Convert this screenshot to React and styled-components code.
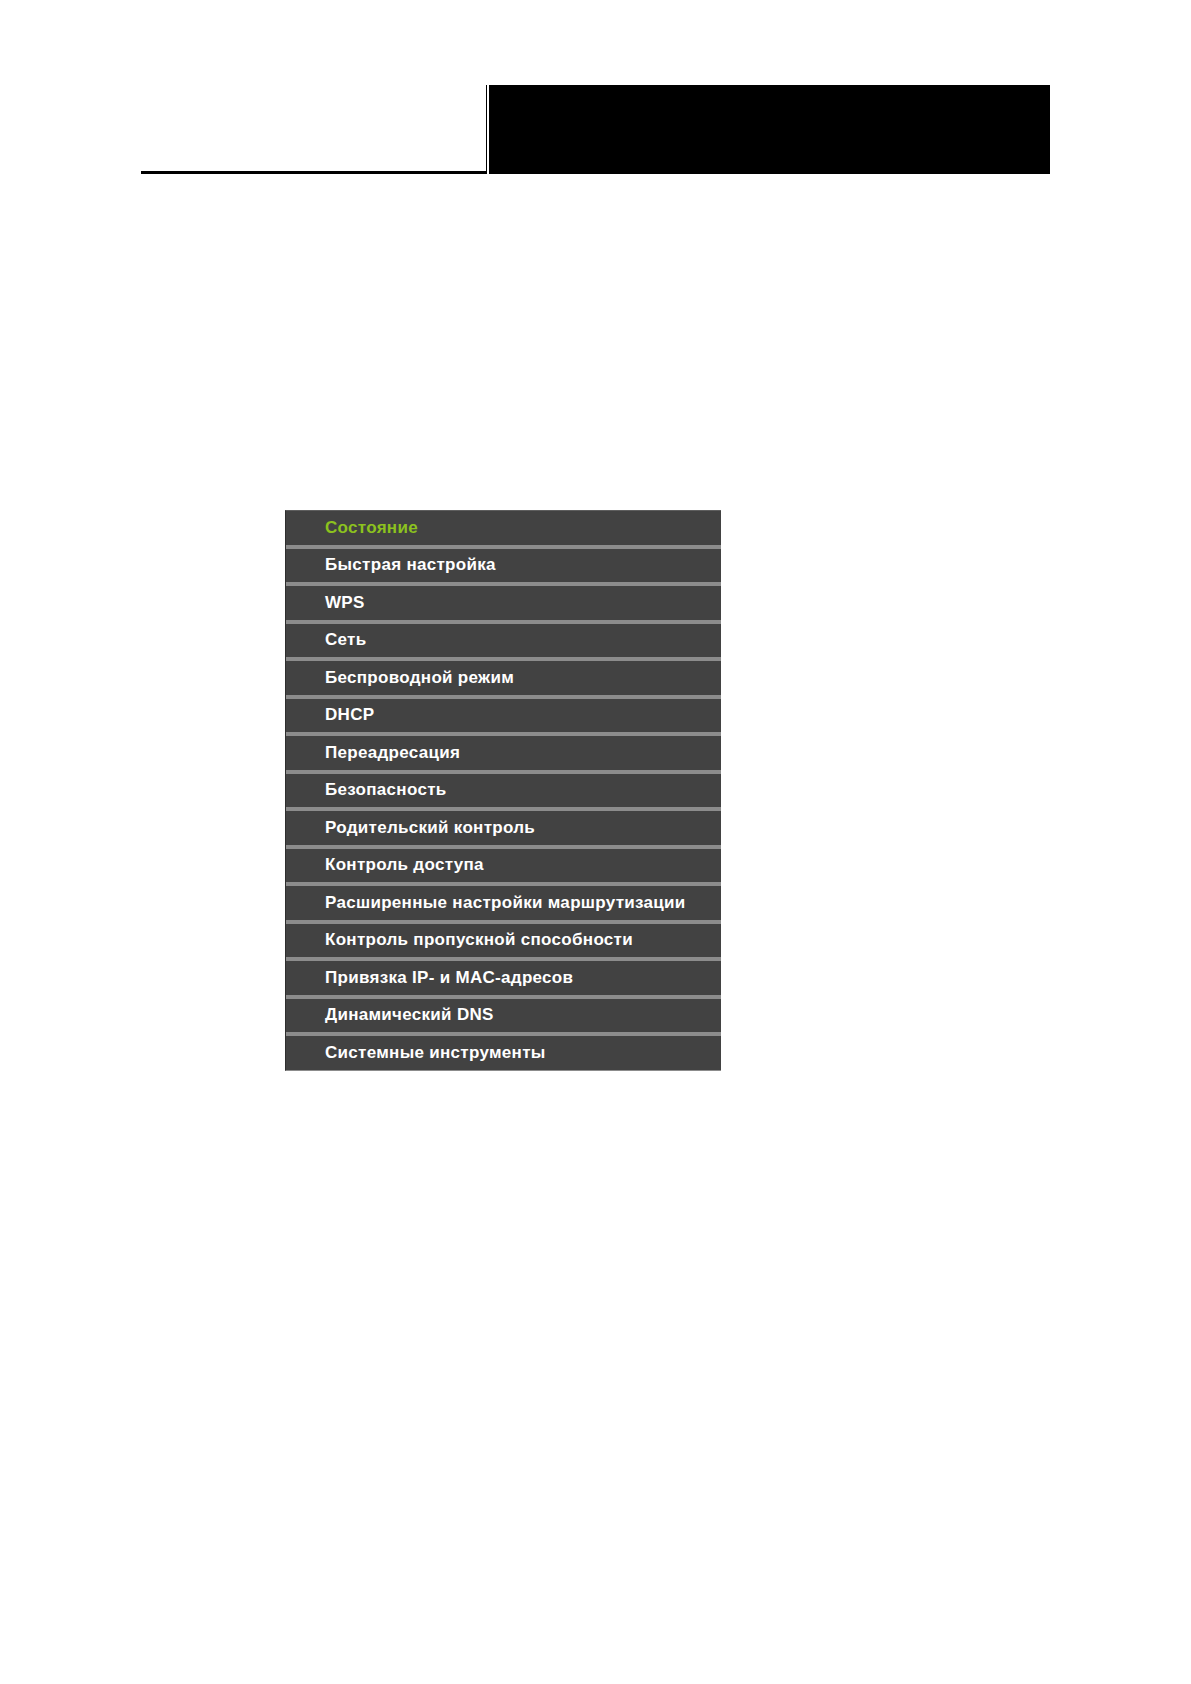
import React from 'react';
import styled, { createGlobalStyle } from 'styled-components';

const GlobalStyle = createGlobalStyle`
  html, body {
    margin: 0;
    padding: 0;
    background: #ffffff;
  }
  body {
    font-family: "Liberation Sans", Arial, sans-serif;
  }
`;

const Page = styled.div`
  width: 1191px;
  min-height: 1684px;
  padding-top: 85px;
  box-sizing: border-box;
`;

const Header = styled.header`
  display: flex;
  align-items: stretch;
  height: 89px;
  padding-left: 141px;
`;

const HeaderRule = styled.div`
  width: 345px;
  border-bottom: 3px solid #000;
  box-sizing: border-box;
`;

const HeaderBlock = styled.div`
  display: flex;
  border-left: 1px solid #000;
  padding-left: 2px;
`;

const HeaderBox = styled.div`
  width: 561px;
  background: #000;
`;

const Menu = styled.nav`
  width: 435px;
  margin: 336px 0 0 285px;
  background: #424242;
  border-top: 1px solid #5e5e5e;
  border-left: 1px solid #2e2e2e;
  border-bottom: 1px solid #8c8c8c;
  display: flex;
  flex-direction: column;
`;

const MenuItem = styled.div`
  height: 33.5px;
  display: flex;
  align-items: center;
  padding-left: 39px;
  color: ${p => (p.$active ? '#8cc21e' : '#ffffff')};
  font-size: 17px;
  letter-spacing: 0.3px;
  font-weight: bold;
  white-space: nowrap;
  & + & {
    border-top: 4px solid #8c8c8c;
  }
`;

const items = [
  'Состояние',
  'Быстрая настройка',
  'WPS',
  'Сеть',
  'Беспроводной режим',
  'DHCP',
  'Переадресация',
  'Безопасность',
  'Родительский контроль',
  'Контроль доступа',
  'Расширенные настройки маршрутизации',
  'Контроль пропускной способности',
  'Привязка IP- и MAC-адресов',
  'Динамический DNS',
  'Системные инструменты',
];

export default function App() {
  return (
    <>
      <GlobalStyle />
      <Page>
        <Header>
          <HeaderRule />
          <HeaderBlock>
            <HeaderBox />
          </HeaderBlock>
        </Header>
        <Menu>
          {items.map((label, i) => (
            <MenuItem key={label} $active={i === 0}>
              {label}
            </MenuItem>
          ))}
        </Menu>
      </Page>
    </>
  );
}
